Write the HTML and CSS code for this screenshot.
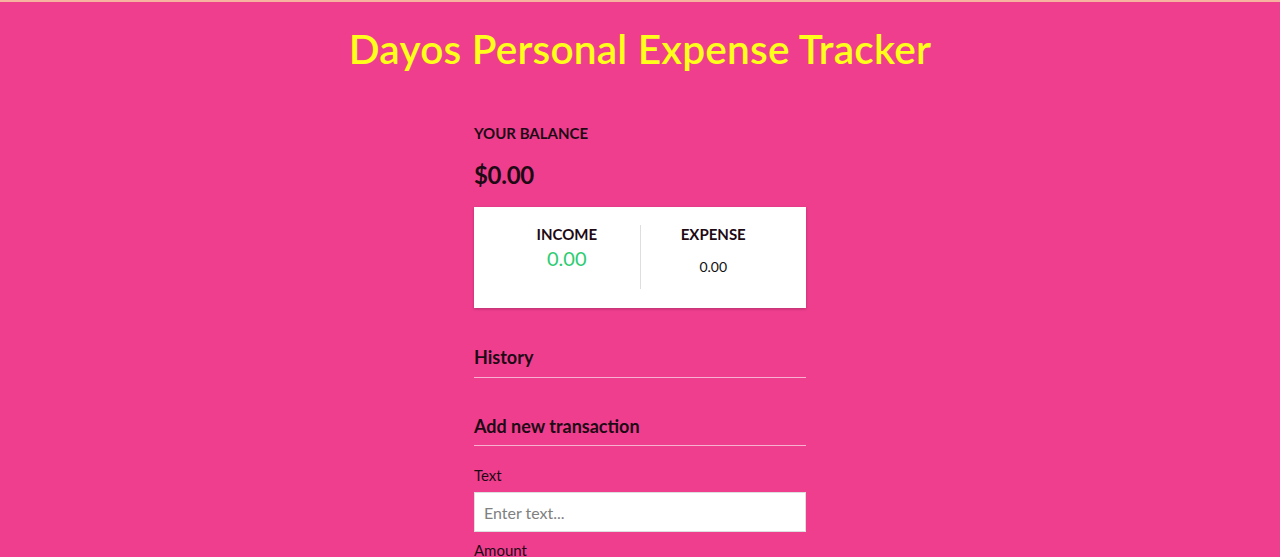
FILE: index.html
```html
<!DOCTYPE html>
<html lang="en">
<head>
<meta charset="UTF-8">
<title>Expense Tracker</title>
<link rel="stylesheet" href="styles.css">
</head>
<body>
  <div class="topline"></div>
  <h2 class="title">Dayos Personal Expense Tracker</h2>
  <div class="container">
    <h4 class="balance-label">Your Balance</h4>
    <h1 class="balance">$0.00</h1>
    <div class="inc-exp">
      <div class="col">
        <h4 class="col-title">Income</h4>
        <p class="money plus">0.00</p>
      </div>
      <div class="col">
        <h4 class="col-title">Expense</h4>
        <p class="money minus">0.00</p>
      </div>
    </div>
    <h3 class="section section-history">History</h3>
    <ul class="list"></ul>
    <h3 class="section">Add new transaction</h3>
    <form class="form">
      <div class="form-control">
        <label class="lbl" for="text">Text</label>
        <input class="field" type="text" id="text" placeholder="Enter text...">
      </div>
      <div class="form-control">
        <label class="lbl" for="amount">Amount</label>
      </div>
    </form>
  </div>
</body>
</html>
```

FILE: styles.css
```css
* { box-sizing: border-box; }
html, body { margin: 0; padding: 0; }
body {
  background: #f03e8f;
  font-family: Lato, "Noto Sans", sans-serif;
  color: #1e0a14;
  min-height: 557px;
  overflow: hidden;
}
.topline { height: 2px; background: #f7b3a0; }
.title {
  margin: 25px 0 0;
  text-align: center;
  color: #ffff1a;
  font-size: 40.6px;
  font-weight: 600;
  line-height: 44px;
  letter-spacing: 0.2px;
}
.container {
  width: 332px;
  margin: 53px auto 0;
}
.balance-label {
  margin: 0;
  font-size: 15px;
  font-weight: 700;
  text-transform: uppercase;
  line-height: 18px;
  letter-spacing: 0;
}
.balance {
  margin: 18px 0 0;
  font-size: 24px;
  font-weight: 700;
  line-height: 30px;
  letter-spacing: -0.3px;
}
.inc-exp {
  margin-top: 17px;
  background: #fff;
  box-shadow: 0 1px 3px rgba(0,0,0,0.25);
  padding: 18px 20px 19px;
  display: flex;
  height: 101px;
}
.col { flex: 1; text-align: center; }
.col:first-of-type { border-right: 1px solid #dedede; }
.col-title {
  margin: 0;
  font-size: 15px;
  font-weight: 700;
  text-transform: uppercase;
  line-height: 18px;
}
.money { margin: 0; }
.plus { color: #2ecc71; font-size: 20px; line-height: 24px; margin-top: 3px; }
.minus { color: #111; font-size: 14px; line-height: 18px; margin-top: 15px; }
.section {
  margin: 37px 0 0;
  font-size: 18px;
  font-weight: 700;
  line-height: 22px;
  padding-bottom: 8px;
  border-bottom: 1px solid rgba(255,255,255,0.6);
}
.section-history { margin-top: 38px; padding-bottom: 9px; }
.list { margin: 0; padding: 0; list-style: none; }
.form { margin: 0; }
.form-control { margin-top: 20px; }
.form-control + .form-control { margin-top: 9px; }
.lbl { display: block; font-size: 15px; line-height: 18px; }
.field {
  display: block;
  width: 100%;
  height: 40px;
  margin-top: 8px;
  border: 1px solid #dedede;
  padding: 10px 9px;
  font-family: Lato, "Noto Sans", sans-serif;
  font-size: 16px;
  background: #fff;
}
.field::placeholder { color: #808080; }
```
